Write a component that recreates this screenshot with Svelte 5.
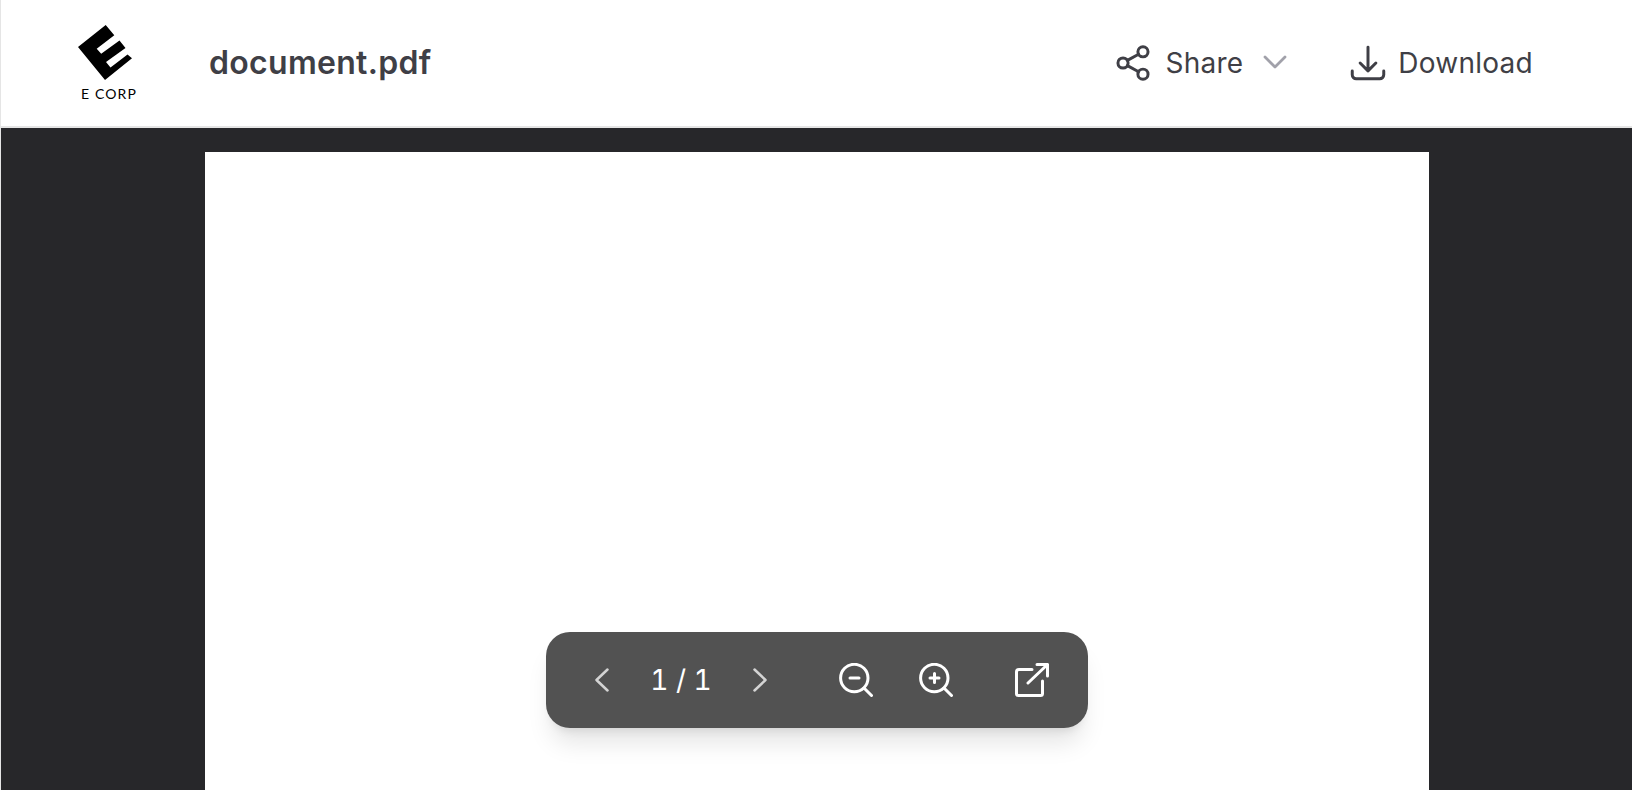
<script>
  const fileName = 'document.pdf';
</script>

<div class="app">
  <header class="header">
    <div class="brand">
      <div class="logo">
        <svg class="mark" viewBox="0 0 54 55" aria-hidden="true">
          <path d="M27.700 0 L36.300 10.300 L18.700 23.700 L23.200 28.800 L41.500 15.500 L47.500 23 L28 37 L32.500 42.500 L49.500 29.500 L54 33.300 L27 55 L0 22 Z" fill="#000" />
        </svg>
        <span class="corp">E CORP</span>
      </div>
      <h1 class="title">{fileName}</h1>
    </div>
    <div class="actions">
      <button class="action share">
        <svg class="icon" viewBox="0 0 24 24" fill="none" stroke="currentColor" stroke-width="1.700" stroke-linecap="round" stroke-linejoin="round" aria-hidden="true">
          <circle cx="17.700" cy="5.600" r="2.900" /><circle cx="6.300" cy="12" r="2.900" /><circle cx="17.700" cy="18.400" r="2.900" />
          <path d="M8.800 13.500l6.400 3.500M15.200 7l-6.400 3.500" />
        </svg>
        <span>Share</span>
        <svg class="chev" viewBox="0 0 24 24" fill="none" stroke="currentColor" stroke-width="2.800" stroke-linecap="round" stroke-linejoin="round" aria-hidden="true">
          <path d="M2 6l10 10L22 6" />
        </svg>
      </button>
      <button class="action download">
        <svg class="icon" viewBox="0 0 24 24" fill="none" stroke="currentColor" stroke-width="1.700" stroke-linecap="round" stroke-linejoin="round" aria-hidden="true">
          <path d="M3 16.500v2.250A2.250 2.250 0 0 0 5.250 21h13.500A2.250 2.250 0 0 0 21 18.750V16.500M16.500 12L12 16.500m0 0L7.500 12m4.500 4.500V3" />
        </svg>
        <span>Download</span>
      </button>
    </div>
  </header>

  <main class="viewer">
    <div class="page"></div>
    <div class="toolbar">
      <div class="pager">
        <button class="tool dim" aria-label="Previous">
          <svg viewBox="0 0 14 24" fill="none" stroke="currentColor" stroke-width="2.500" stroke-linecap="round" stroke-linejoin="round"><path d="M12.500 1.500 L1.500 12 L12.500 22.500" /></svg>
        </button>
        <span class="count">1 / 1</span>
        <button class="tool dim" aria-label="Next">
          <svg viewBox="0 0 14 24" fill="none" stroke="currentColor" stroke-width="2.500" stroke-linecap="round" stroke-linejoin="round"><path d="M1.500 1.500 L12.500 12 L1.500 22.500" /></svg>
        </button>
      </div>
      <div class="zoom">
        <button class="tool" aria-label="Zoom out">
          <svg viewBox="0 0 34 34" fill="none" stroke="currentColor" stroke-width="3" stroke-linecap="round" stroke-linejoin="round"><circle cx="15.300" cy="15" r="13.700" /><path d="M11 15h9M25 25l7.500 7.500" /></svg>
        </button>
        <button class="tool" aria-label="Zoom in">
          <svg viewBox="0 0 34 34" fill="none" stroke="currentColor" stroke-width="3" stroke-linecap="round" stroke-linejoin="round"><circle cx="15.300" cy="15" r="13.700" /><path d="M11 15h9M15.500 10.500v9M25 25l7.500 7.500" /></svg>
        </button>
      </div>
      <button class="tool open" aria-label="Open in new tab">
        <svg viewBox="0 0 34 34" fill="none" stroke="currentColor" stroke-width="3" stroke-linecap="round" stroke-linejoin="round"><path d="M17 6.500H4a2.500 2.500 0 0 0-2.500 2.500v21.500a2 2 0 0 0 2 2h22a2 2 0 0 0 2-2V18M13 20L32.500 1.500M22 1.500h10.500V13" /></svg>
      </button>
    </div>
  </main>
</div>

<style>
  :global(body) {
    margin: 0;
    background: #fff;
  }

  .app {
    height: 100vh;
    display: flex;
    flex-direction: column;
    overflow: hidden;
    border-left: 1px solid #e5e5e5;
    font-family: Inter, "Liberation Sans", sans-serif;
    color: #3f3f46;
  }

  .header {
    flex: none;
    height: 128px;
    box-sizing: border-box;
    display: flex;
    align-items: center;
    justify-content: space-between;
    padding: 0 99px 0 77px;
    background: #fff;
    border-bottom: 2px solid #e5e5e5;
  }

  .brand {
    display: flex;
    align-items: center;
    gap: 69px;
  }

  .logo {
    width: 62px;
    display: flex;
    flex-direction: column;
    align-items: center;
    gap: 7px;
  }

  .mark {
    width: 54px;
    height: 55px;
    display: block;
    align-self: flex-start;
  }

  .corp {
    font-family: Lato, sans-serif;
    font-size: 14px;
    line-height: 14px;
    letter-spacing: 1.100px;
    white-space: nowrap;
    color: #000;
  }

  .title {
    margin: 0;
    font-size: 32px;
    line-height: 40px;
    font-weight: 600;
    letter-spacing: 0.300px;
    color: #3f3f46;
  }

  .actions {
    display: flex;
    align-items: center;
    gap: 59.500px;
  }

  .action {
    display: flex;
    align-items: center;
    gap: 11px;
    padding: 0;
    border: 0;
    background: none;
    font: inherit;
    font-size: 28px;
    line-height: 36px;
    letter-spacing: 0.250px;
    color: #3f3f46;
  }

  .download {
    gap: 9.500px;
  }

  .icon {
    width: 42px;
    height: 42px;
    display: block;
  }

  .chev {
    width: 24px;
    height: 24px;
    margin-left: 9px;
    color: #a1a1aa;
  }

  .viewer {
    flex: 1;
    position: relative;
    min-height: 0;
    background: #27272a;
    padding-top: 24px;
    padding-left: 1px;
    display: flex;
    justify-content: center;
  }

  .page {
    width: 1224px;
    height: 1000px;
    background: #fff;
    flex: none;
  }

  .toolbar {
    position: absolute;
    left: 545px;
    bottom: 62px;
    width: 542px;
    height: 96px;
    box-sizing: border-box;
    padding: 0 39px 0 49px;
    display: flex;
    align-items: center;
    background: #525252;
    border-radius: 24px;
    color: #fff;
    box-shadow: 0 20px 25px -5px rgba(0, 0, 0, 0.1), 0 8px 10px -6px rgba(0, 0, 0, 0.1);
  }

  .pager {
    display: flex;
    align-items: center;
  }

  .count {
    width: 144px;
    text-align: center;
    font-size: 28px;
    line-height: 36px;
    font-variant-numeric: tabular-nums;
    color: #fff;
  }

  .zoom {
    display: flex;
    align-items: center;
    gap: 46px;
    margin-left: 72px;
  }

  .open {
    margin-left: 62px;
  }

  .tool {
    display: block;
    padding: 0;
    border: 0;
    background: none;
    color: #fff;
  }

  .tool svg {
    display: block;
    width: 34px;
    height: 34px;
  }

  .tool.dim {
    color: #d4d4d4;
  }

  .tool.dim svg {
    width: 14px;
    height: 24px;
  }
</style>
